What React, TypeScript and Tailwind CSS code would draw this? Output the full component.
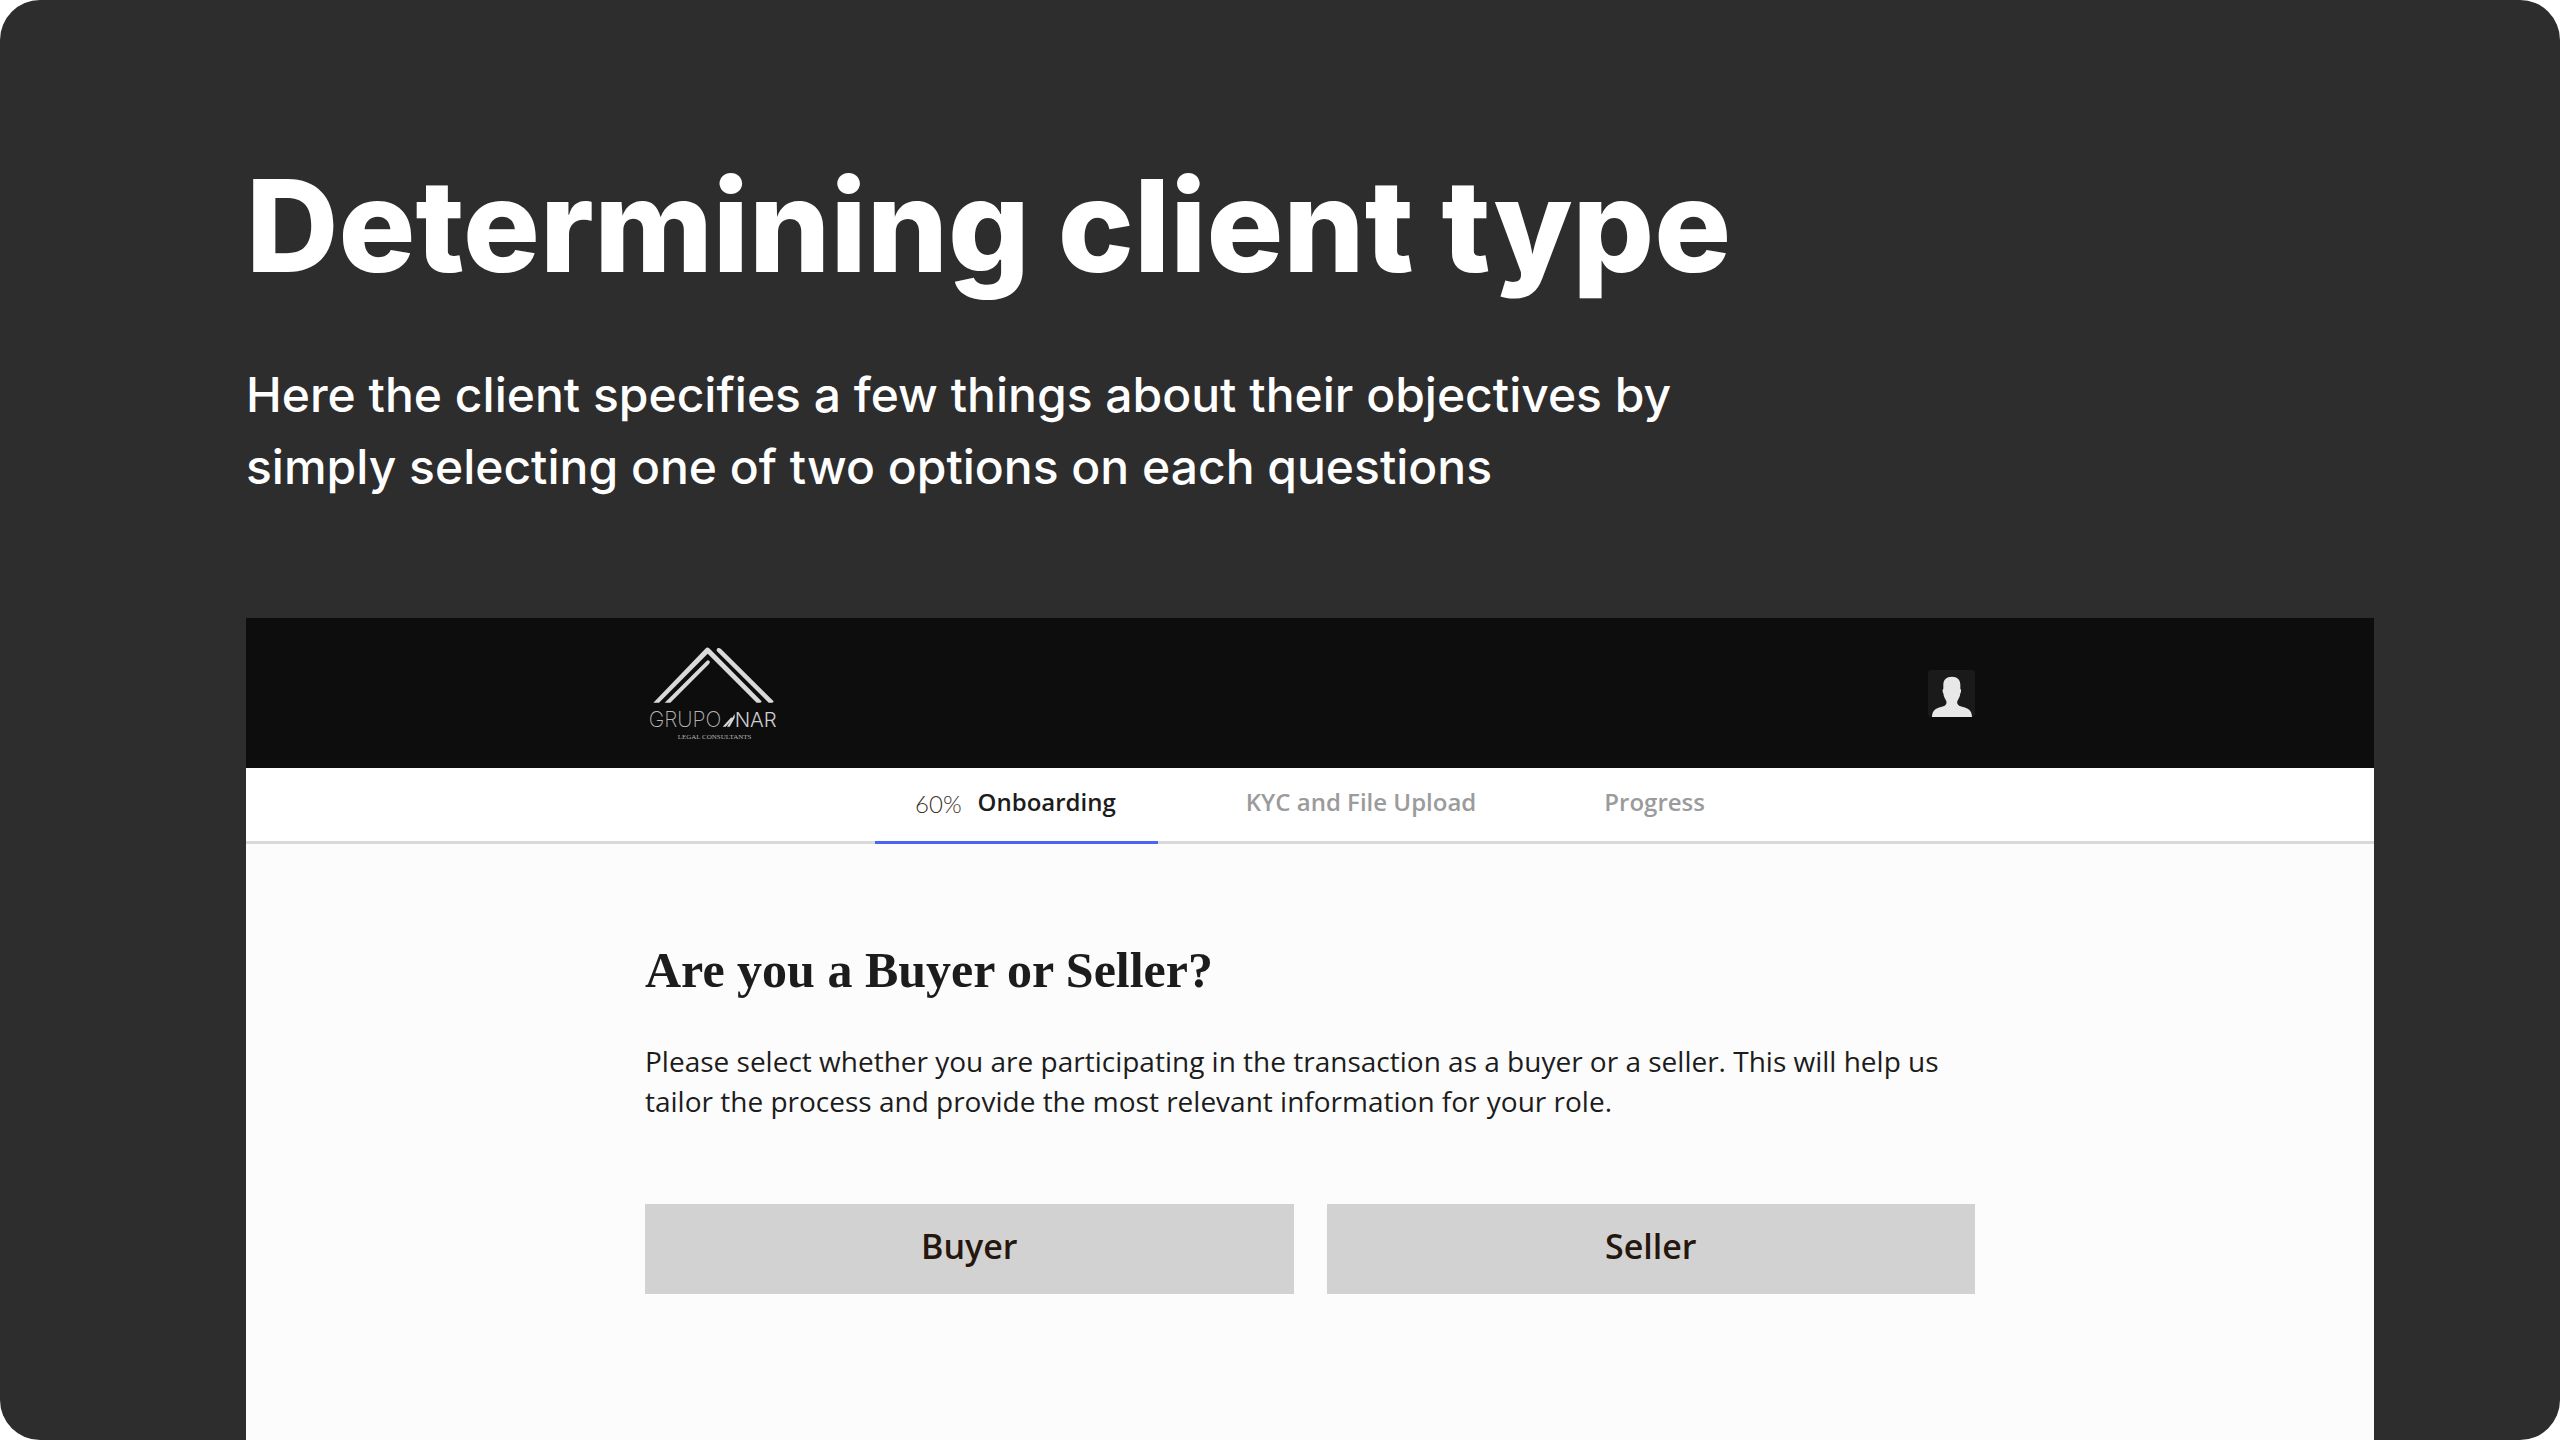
function Logo() {
  return (
    <svg viewBox="45 39 405 300" className="h-[100px] w-[135px]" role="img" aria-label="Grupo INAR Legal Consultants">
      <g fill="#d9d9d9">
        <path d="M70 218 L226 56 Q233 48 240 57 L394 213 Q396 218 389 218 H380 L233 71 L87 218 Z" />
        <path d="M104 218 L229 94 Q235 88 239 94 Q241 98 237 102 L121 218 Z" />
        <path d="M261 64 Q258 57 264 54 Q269 53 273 57 L430 213 Q432 218 425 218 H416 Z" />
        <path d="M278 290 L304 262 L308 267 L287 290 Z" />
        <path d="M291 290 L314 252 V263 L299 290 Z" />
      </g>
      <text x="56" y="291" fontFamily="Inter, sans-serif" fontSize="63" fontWeight="200" fill="#b5b5b5">
        GRUPO
      </text>
      <text x="314" y="291" fontFamily="Inter, sans-serif" fontSize="61" fontWeight="300" fill="#cfcfcf">
        NAR
      </text>
      <text x="143" y="328" fontFamily="'Liberation Serif', serif" fontSize="21" fill="#b5b5b5">
        LEGAL CONSULTANTS
      </text>
    </svg>
  );
}

function Avatar() {
  return (
    <button type="button" aria-label="Account" className="overflow-hidden rounded-[3px] bg-[#1a1a1a]">
      <svg viewBox="0 0 141 141" className="size-[47px]" aria-hidden="true">
        <path
          fill="#e8e8e8"
          d="M72 20 C88 20 97 29 97 44 V56 C100 58 100 66 97 70 C96 82 90 88 88 94 C86 103 92 108 102 110 C120 114 131 119 132 141 H12 C13 119 24 114 42 110 C52 108 57 103 55 94 C53 88 47 82 46 70 C43 66 43 58 46 56 V44 C46 29 55 20 72 20 Z"
        />
      </svg>
    </button>
  );
}

function Tabs() {
  const tab = "-mb-[3px] flex items-center border-b-[3px] pl-10 pb-1.5";
  return (
    <nav className="flex h-[76px] justify-center gap-12 border-b-[3px] border-[#d9d9d9] bg-white text-2xl font-semibold">
      <a href="#onboarding" aria-current="page" className={`${tab} gap-4 border-[#4c62f8] pr-[42px] text-[#1c1c1c]`}>
        <span className="pt-1 font-[Lato] font-light text-[#3d302b]">60%</span>
        <span>Onboarding</span>
      </a>
      <a href="#kyc" className={`${tab} border-transparent pr-10 text-[#9b9b9b]`}>
        KYC and File Upload
      </a>
      <a href="#progress" className={`${tab} border-transparent pr-10 text-[#9b9b9b]`}>
        Progress
      </a>
    </nav>
  );
}

function Choice({ label }: { label: string }) {
  return (
    <button type="button" className="h-[90px] flex-1 bg-[#d2d2d2] pb-1.5 text-[34px] font-semibold text-[#25160e]">
      {label}
    </button>
  );
}

export default function App() {
  return (
    <div className="bg-white">
      <main className="flex min-h-screen flex-col overflow-hidden rounded-[40px] bg-[#2d2d2d] pt-[146px] pr-[186px] pl-[246px] font-[Inter,sans-serif] text-white">
        <h1 className="text-[128px] leading-[160px] font-extrabold">Determining client type</h1>
        <p className="mt-[53px] max-w-[1500px] text-[48px] leading-[72px] font-medium">
          Here the client specifies a few things about their objectives by simply selecting one of two options on each
          questions
        </p>

        <section className="mt-[115px] flex flex-1 flex-col bg-[#fcfcfc] font-['Open_Sans',sans-serif] text-[#1c1c1c]">
          <header className="bg-[#0d0d0d]">
            <div className="mx-auto flex h-[150px] w-5/8 items-center justify-between">
              <Logo />
              <Avatar />
            </div>
          </header>
          <Tabs />
          <div className="mx-auto w-5/8 pt-24">
            <h2 className="font-['Liberation_Serif',serif] text-[50px] leading-[60px] font-bold">
              Are you a Buyer or Seller?
            </h2>
            <p className="mt-[41px] text-[28px] leading-10">
              Please select whether you are participating in the transaction as a buyer or a seller. This will help us
              tailor the process and provide the most relevant information for your role.
            </p>
            <div className="mt-[83px] flex gap-[33px]">
              <Choice label="Buyer" />
              <Choice label="Seller" />
            </div>
          </div>
        </section>
      </main>
    </div>
  );
}
